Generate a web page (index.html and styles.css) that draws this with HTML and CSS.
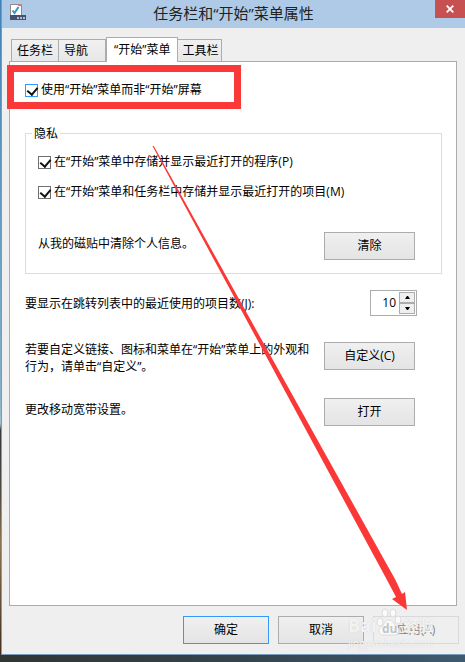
FILE: index.html
```html
<!DOCTYPE html>
<html lang="zh-CN">
<head>
  <meta charset="UTF-8">
  <meta name="viewport" content="width=device-width, initial-scale=1.0">
  <title>任务栏和“开始”菜单属性</title>
  <link rel="stylesheet" href="styles.css">
</head>
<body>
  <div class="window">
    <header class="titlebar">
      <svg class="app-icon" width="16" height="16" viewBox="0 0 16 16">
        <path d="M0.500 0.500h11v12h-11z" fill="#fff" stroke="#8b8b8b"/>
        <path d="M8 0h3v2h-3z" fill="#c88078"/>
        <path d="M2.500 6.500l2 2.500l4-6" fill="none" stroke="#3197d6" stroke-width="2"/>
        <path d="M0 11h16v5h-16z" fill="#42526f"/>
        <path d="M7 13h2v2h-2zM10 13h2v2h-2zM13 13h2v2h-2z" fill="#b5bfce"/>
      </svg>
      <h1>任务栏和“开始”菜单属性</h1>
      <button class="close" type="button" aria-label="关闭">
        <svg width="8" height="8" viewBox="0 0 8 8"><path d="M0.700 0.700l6.600 6.600M7.300 0.700l-6.600 6.600" stroke="#fff" stroke-width="1.800"/></svg>
      </button>
    </header>

    <form class="dialog">
      <div class="tabs" role="tablist">
        <button class="tab" type="button" role="tab">任务栏</button>
        <button class="tab" type="button" role="tab">导航</button>
        <button class="tab active" type="button" role="tab" aria-selected="true">“开始”菜单</button>
        <button class="tab" type="button" role="tab">工具栏</button>
      </div>

      <div class="panel" role="tabpanel">
        <div class="check main-check">
          <input type="checkbox" id="useStart" checked>
          <label for="useStart">使用“开始”菜单而非“开始”屏幕</label>
          <div class="highlight"></div>
        </div>

        <fieldset>
          <legend>隐私</legend>
          <div class="check">
            <input type="checkbox" id="programs" checked>
            <label for="programs">在“开始”菜单中存储并显示最近打开的程序(P)</label>
          </div>
          <div class="check">
            <input type="checkbox" id="items" checked>
            <label for="items">在“开始”菜单和任务栏中存储并显示最近打开的项目(M)</label>
          </div>
          <div class="row clear-row">
            <p>从我的磁贴中清除个人信息。</p>
            <button class="btn" type="button">清除</button>
          </div>
        </fieldset>

        <div class="row spin-row">
          <label for="jump">要显示在跳转列表中的最近使用的项目数(J):</label>
          <div class="spinner">
            <input type="text" id="jump" value="10">
            <div class="arrows">
              <button type="button" aria-label="增加"><svg width="5" height="3" viewBox="0 0 5 3"><path d="M0 3h5L3 0H2z"/></svg></button>
              <button type="button" aria-label="减少"><svg width="5" height="3" viewBox="0 0 5 3"><path d="M0 0h5L3 3H2z"/></svg></button>
            </div>
          </div>
        </div>

        <div class="row custom-row">
          <p>若要自定义链接、图标和菜单在“开始”菜单上的外观和<br>行为，请单击“自定义”。</p>
          <button class="btn" type="button">自定义(C)</button>
        </div>

        <div class="row">
          <p>更改移动宽带设置。</p>
          <button class="btn" type="button">打开</button>
        </div>
      </div>

      <footer class="actions">
        <button class="btn default" type="submit">确定</button>
        <button class="btn" type="button">取消</button>
        <button class="btn" type="button" disabled>应用(A)</button>
        <div class="watermark">
          <div class="brand">
            <span>Bai</span>
            <svg width="27" height="28" viewBox="0 0 27 28">
              <ellipse cx="4" cy="14" rx="3" ry="4"/>
              <ellipse cx="9" cy="5" rx="3" ry="4"/>
              <ellipse cx="17" cy="5" rx="3" ry="4"/>
              <ellipse cx="22" cy="12" rx="3" ry="4"/>
              <path d="M13 12c4 0 5 5 8 7 4 3 2 8-2 8H7c-4 0-6-5-2-8 3-2 4-7 8-7z"/>
              <text x="6" y="25">du</text>
            </svg>
            <span>经验</span>
          </div>
          <div class="site">jingyan.baidu.com</div>
        </div>
      </footer>
    </form>
  </div>

  <svg class="pointer" width="465" height="662" viewBox="0 0 465 662">
    <path d="M152.500 146L153.800 146L395.500 580L402 594L405 592L407 610L392 599L396 597L387 580Z"/>
  </svg>
</body>
</html>
```
FILE: styles.css
```css
* { box-sizing: border-box; }
body {
  margin: 0;
  min-height: 100vh;
  display: flex;
  flex-direction: column;
  padding: 0 0 7px 1px;
  background:
    linear-gradient(to right, #303533, #34434c 50%, #3e5a70) bottom / 100% 7px no-repeat,
    linear-gradient(#3f82b5, #86b1cb 60%, #a5c0ce 64%, #343a3c 65%, #514c43 75%, #8d764f 82%, #3d2b1b 100%);
  font-family: "Open Sans", "Noto Sans CJK SC", sans-serif;
  font-size: 12px;
  line-height: 17px;
  color: #000;
}
button, input { font: inherit; color: inherit; }
p { margin: 0; }

.window {
  flex: 1;
  display: flex;
  flex-direction: column;
  background: #efefef;
  border-left: 1px solid #6f9dc3;
  border-bottom: 1px solid #7a9cbc;
}
.titlebar {
  position: relative;
  height: 28px;
  display: flex;
  align-items: center;
  justify-content: center;
  padding-bottom: 2px;
  background: #aecae7;
}
.titlebar h1 {
  margin: 0;
  font-size: 15px;
  line-height: 20px;
  font-weight: normal;
  color: #222;
}
.app-icon { position: absolute; left: 8px; top: 4px; }
.close {
  position: absolute;
  right: 0;
  top: 0;
  width: 30px;
  height: 18px;
  padding: 0;
  border: none;
  background: #c75050;
  line-height: 0;
}

.dialog {
  flex: 1;
  display: flex;
  flex-direction: column;
  padding: 9px 8px 0 7px;
}
.tabs {
  display: flex;
  align-items: flex-end;
  padding-left: 2px;
}
.tab {
  height: 22px;
  padding: 0 5px;
  border: 1px solid #acacac;
  border-bottom: none;
  background: linear-gradient(#f1f1f1, #e7e7e7);
  line-height: 20px;
}
.tab + .tab { border-left: none; }
.tab:nth-child(2) { padding-right: 17px; }
.tab:last-child { padding: 0 3px 0 4px; }
.tab.active {
  position: relative;
  height: 25px;
  margin-bottom: -1px;
  padding: 0 7px;
  border-left: 1px solid #acacac;
  background: #fff;
}

.panel {
  flex: 1;
  padding: 18px 14px 20px 15px;
  border: 1px solid #acacac;
  background: #fff;
}
.check {
  display: flex;
  align-items: center;
  gap: 3px;
  height: 18px;
}
.check input {
  appearance: none;
  width: 13px;
  height: 13px;
  margin: 2px 0 0;
  border: 1px solid #707070;
  background: #fff;
}
.check input:checked::before {
  content: "";
  display: block;
  width: 5px;
  height: 8px;
  margin: 0 0 0 3px;
  border: solid #111;
  border-width: 0 2px 2px 0;
  transform: rotate(40deg);
}
.main-check { position: relative; }
.main-check input { border-color: #3399ff; }
/* red frame around the first option */
.highlight {
  position: absolute;
  left: -18px;
  top: -15px;
  width: 234px;
  height: 44px;
  border: 7px solid #fb3838;
  pointer-events: none;
}

fieldset {
  min-width: 0;
  margin: 27px 0 16px;
  padding: 10px 26px 13px 12px;
  border: 1px solid #dcdcdc;
}
legend {
  margin-left: -6px;
  padding: 0 2px;
}
fieldset .check + .check { margin-top: 12px; }

.row {
  display: flex;
  align-items: center;
  justify-content: space-between;
  height: 28px;
  margin-top: 28px;
  padding-right: 27px;
}
.row p {
  white-space: nowrap;
  padding-bottom: 6px;
}
.clear-row {
  margin-top: 32px;
  padding-right: 0;
}
.spin-row {
  height: 26px;
  margin-top: 0;
  padding-right: 25px;
}
.custom-row { margin-top: 26px; }
.custom-row p { padding: 4px 0 0; }

.btn {
  flex: none;
  width: 91px;
  height: 28px;
  padding: 0 0 2px;
  border: 1px solid #acacac;
  background: linear-gradient(#f0f0f0, #e4e4e4);
}
.spinner {
  display: flex;
  width: 47px;
  height: 26px;
  padding: 1px;
  border: 1px solid #acacac;
}
.spinner input {
  flex: 1;
  min-width: 0;
  padding: 0 3px 2px 0;
  border: none;
  text-align: right;
}
.arrows { width: 16px; }
.arrows button {
  display: flex;
  align-items: center;
  justify-content: center;
  width: 16px;
  height: 11px;
  padding: 0;
  border: 1px solid #acacac;
  background: #efefef;
}

.actions {
  position: relative;
  display: flex;
  justify-content: flex-end;
  gap: 9px;
  margin-right: -2px;
  padding: 10px 0;
}
.actions .btn { width: 86px; }
.actions .default { border-color: #3399ff; }
.actions .btn:disabled {
  border-color: #d9d9d9;
  background: #efefef;
  color: #838383;
}

.watermark {
  position: absolute;
  right: 23px;
  top: 2px;
  width: 88px;
  color: rgba(255, 255, 255, 0.8);
  text-shadow: 0 0 1px #c4c4c4;
  pointer-events: none;
}
.brand {
  display: flex;
  align-items: flex-end;
  height: 28px;
  font-size: 18px;
  line-height: 22px;
  font-weight: bold;
}
.brand svg {
  flex: none;
  fill: rgba(255, 255, 255, 0.7);
  stroke: #dcdcdc;
  stroke-width: 1;
}
.brand text {
  font-size: 12px;
  fill: #c4c4c4;
  stroke: none;
  text-shadow: none;
}
.brand span { white-space: nowrap; }
.brand span:last-child { font-size: 15px; }
.site {
  font-size: 10px;
  line-height: 14px;
}

.pointer {
  position: absolute;
  left: 0;
  top: 0;
  fill: #fb3838;
  pointer-events: none;
}
```
